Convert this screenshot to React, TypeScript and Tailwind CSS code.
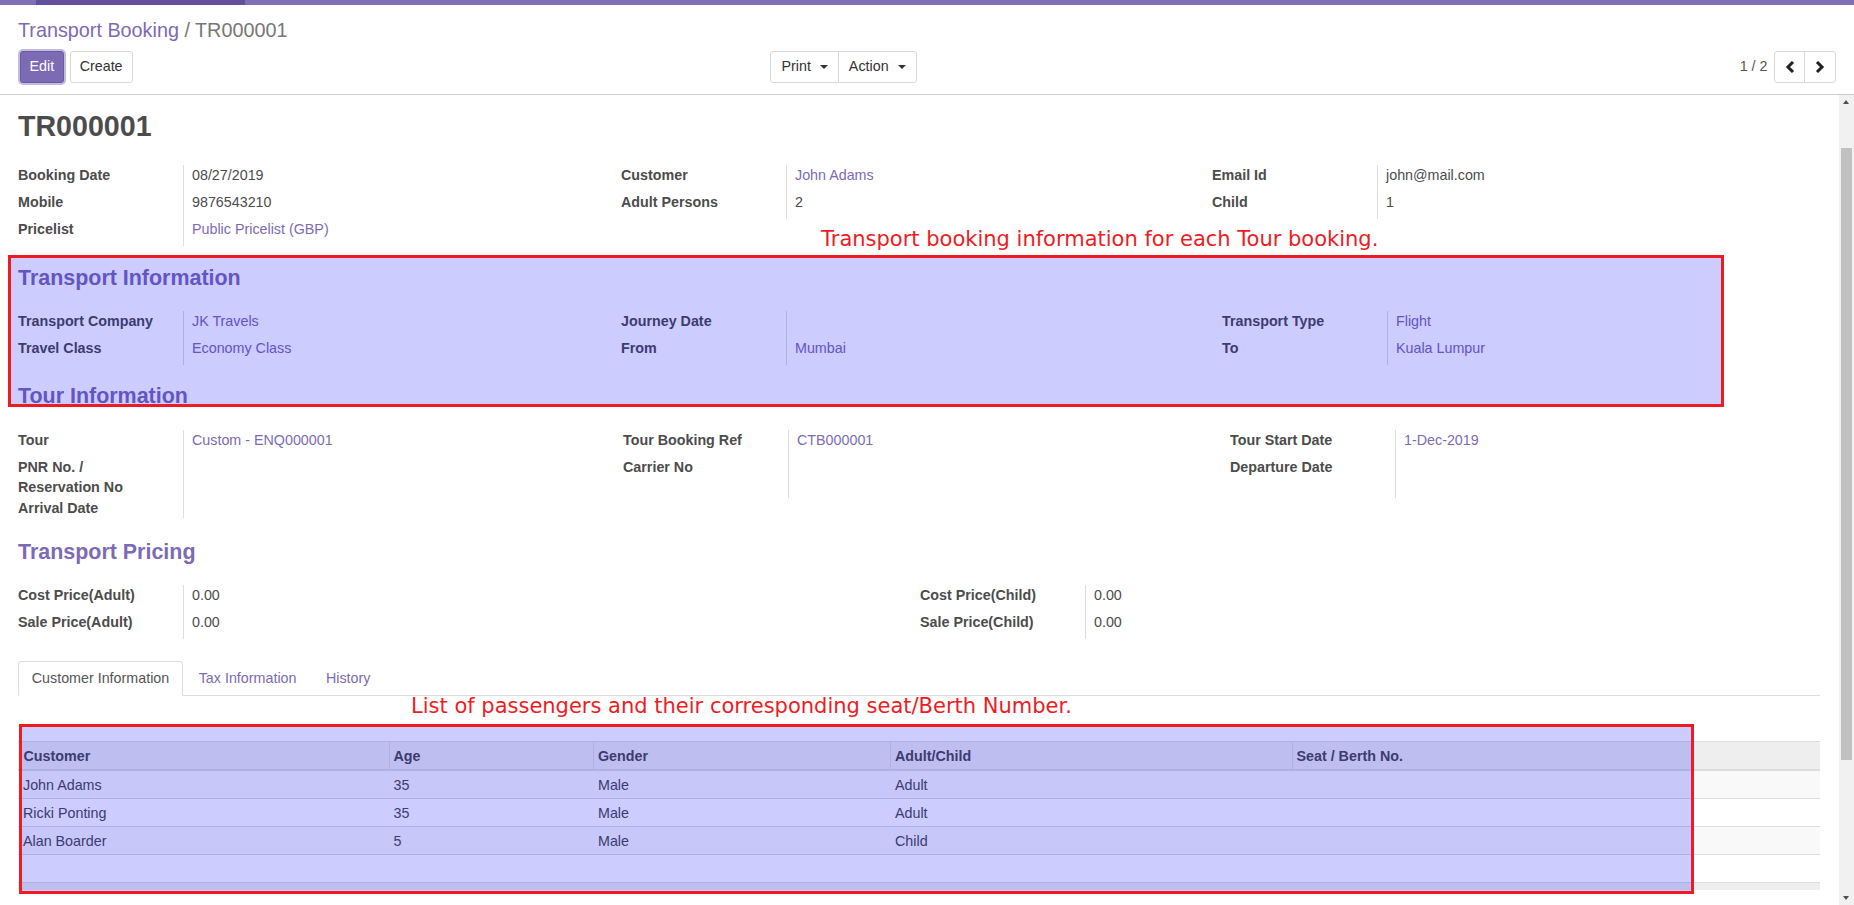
import React from "react";

type Field = { label: React.ReactNode; value?: string; link?: boolean; h: string };
type Column = { w: string; fields: Field[] };

function Group({ cols, className }: { cols: Column[]; className: string }) {
  return (
    <div className={`flex ${className}`}>
      {cols.map((c, i) => (
        <div key={i} className={c.w}>
          {c.fields.map((f, j) => (
            <div key={j} className={`flex ${f.h}`}>
              <div className="w-[165px] shrink-0 font-bold">{f.label}</div>
              <div
                className={`flex-1 border-l border-[#dddddd] pl-2 ${
                  f.link ? "text-[#7c6bb4]" : ""
                }`}
              >
                {f.value}
              </div>
            </div>
          ))}
        </div>
      ))}
    </div>
  );
}

function Heading({ children, className }: { children: React.ReactNode; className: string }) {
  return (
    <div className={`text-[21.45px] font-bold leading-[1.1] text-[#7c6bb4] ${className}`}>
      {children}
    </div>
  );
}

function Caret() {
  return (
    <span className="ml-[9px] inline-block h-0 w-0 border-x-[4px] border-t-[4px] border-x-transparent border-t-[#333]" />
  );
}

function Chevron({ dir }: { dir: "left" | "right" }) {
  return (
    <svg width="10" height="12" viewBox="0 0 10 12">
      <polyline
        points={dir === "left" ? "8,1 3,6 8,11" : "2,1 7,6 2,11"}
        fill="none"
        stroke="#222"
        strokeWidth="3"
        strokeLinejoin="miter"
      />
    </svg>
  );
}

const passengers = [
  { name: "John Adams", age: "35", gender: "Male", type: "Adult" },
  { name: "Ricki Ponting", age: "35", gender: "Male", type: "Adult" },
  { name: "Alan Boarder", age: "5", gender: "Male", type: "Child" },
];

export default function App() {
  return (
    <div className="relative h-[905px] w-[1854px] overflow-hidden bg-white font-['Liberation_Sans',Arial,sans-serif] text-[14.3px] leading-[20.43px] text-[#4c4c4c]">
      {/* navbar remnant */}
      <div className="flex h-[5px] bg-[#7e6fb6]">
        <div className="ml-[36px] w-[209px] bg-[#654f9f]" />
      </div>

      {/* control panel */}
      <div className="h-[90px] border-b border-[#cccccc] px-[18px]">
        <div className="pt-[11px] text-[19.8px] leading-[28.3px]">
          <span className="text-[#7c6bb4]">Transport Booking</span>
          <span className="text-[#777777]"> / TR000001</span>
        </div>
        <div className="mt-[6.4px] flex h-[32px]">
          <div className="flex w-[909px]">
            <button className="ml-[1.5px] h-[32px] rounded-[3px] border border-[#6b5aa5] bg-[#7c6bb4] px-[9px] text-[14.3px] text-white shadow-[0_0_0_2px_rgba(124,107,180,0.45)]">
              Edit
            </button>
            <button className="ml-[5.5px] h-[32px] rounded-[3px] border border-[#d9d9d9] bg-white px-[9px] text-[14.3px] text-[#333]">
              Create
            </button>
            <div className="ml-auto mr-[10.4px] flex h-[32px] rounded-[3px] border border-[#d9d9d9] text-[#333]">
              <div className="flex items-center border-r border-[#d9d9d9] px-[10px]">
                Print
                <Caret />
              </div>
              <div className="flex items-center px-[10px]">
                Action
                <Caret />
              </div>
            </div>
          </div>
          <div className="flex flex-1 items-center justify-end">
            <span className="mr-[6.5px] text-[#555]">1 / 2</span>
            <div className="flex h-[32px] rounded-[3px] border border-[#d9d9d9]">
              <div className="flex w-[30px] items-center justify-center border-r border-[#d9d9d9]">
                <Chevron dir="left" />
              </div>
              <div className="flex w-[30px] items-center justify-center">
                <Chevron dir="right" />
              </div>
            </div>
          </div>
        </div>
      </div>

      {/* content + scrollbar */}
      <div className="flex h-[810px]">
        <div className="flex-1 overflow-hidden pl-[18px] pr-[19px] pt-[16.3px]">
          <div className="text-[28.6px] font-bold leading-[1.1]">TR000001</div>

          <Group
            className="mt-[22px]"
            cols={[
              {
                w: "w-[603px]",
                fields: [
                  { label: "Booking Date", value: "08/27/2019", h: "h-[27px]" },
                  { label: "Mobile", value: "9876543210", h: "h-[27px]" },
                  { label: "Pricelist", value: "Public Pricelist (GBP)", link: true, h: "h-[27px]" },
                ],
              },
              {
                w: "w-[591px]",
                fields: [
                  { label: "Customer", value: "John Adams", link: true, h: "h-[27px]" },
                  { label: "Adult Persons", value: "2", h: "h-[27px]" },
                ],
              },
              {
                w: "flex-1",
                fields: [
                  { label: "Email Id", value: "john@mail.com", h: "h-[27px]" },
                  { label: "Child", value: "1", h: "h-[27px]" },
                ],
              },
            ]}
          />

          <Heading className="mt-[21.5px]">Transport Information</Heading>
          <Group
            className="mt-[20.1px]"
            cols={[
              {
                w: "w-[603px]",
                fields: [
                  { label: "Transport Company", value: "JK Travels", link: true, h: "h-[27px]" },
                  { label: "Travel Class", value: "Economy Class", link: true, h: "h-[27px]" },
                ],
              },
              {
                w: "w-[601px]",
                fields: [
                  { label: "Journey Date", value: "", h: "h-[27px]" },
                  { label: "From", value: "Mumbai", link: true, h: "h-[27px]" },
                ],
              },
              {
                w: "flex-1",
                fields: [
                  { label: "Transport Type", value: "Flight", link: true, h: "h-[27px]" },
                  { label: "To", value: "Kuala Lumpur", link: true, h: "h-[27px]" },
                ],
              },
            ]}
          />

          <Heading className="mt-[20.3px]">Tour Information</Heading>
          <Group
            className="mt-[21.1px]"
            cols={[
              {
                w: "w-[605px]",
                fields: [
                  { label: "Tour", value: "Custom - ENQ000001", link: true, h: "h-[27px]" },
                  {
                    label: (
                      <>
                        PNR No. /<br />
                        Reservation No
                      </>
                    ),
                    value: "",
                    h: "h-[40.86px]",
                  },
                  { label: "Arrival Date", value: "", h: "h-[20.43px]" },
                ],
              },
              {
                w: "w-[607px]",
                fields: [
                  { label: "Tour Booking Ref", value: "CTB000001", link: true, h: "h-[27px]" },
                  { label: "Carrier No", value: "", h: "h-[41px]" },
                ],
              },
              {
                w: "flex-1",
                fields: [
                  { label: "Tour Start Date", value: "1-Dec-2019", link: true, h: "h-[27px]" },
                  { label: "Departure Date", value: "", h: "h-[41px]" },
                ],
              },
            ]}
          />

          <Heading className="mt-[22.5px]">Transport Pricing</Heading>
          <Group
            className="mt-[20.6px]"
            cols={[
              {
                w: "w-[902px]",
                fields: [
                  { label: "Cost Price(Adult)", value: "0.00", h: "h-[27px]" },
                  { label: "Sale Price(Adult)", value: "0.00", h: "h-[27px]" },
                ],
              },
              {
                w: "flex-1",
                fields: [
                  { label: "Cost Price(Child)", value: "0.00", h: "h-[27px]" },
                  { label: "Sale Price(Child)", value: "0.00", h: "h-[27px]" },
                ],
              },
            ]}
          />

          {/* tabs */}
          <div className="mt-[22.2px] flex h-[35px] border-b border-[#dddddd]">
            <div className="mr-[2px] flex h-[35px] items-center rounded-t-[3px] border border-[#dddddd] border-b-white bg-white px-[12.75px] text-[#555]">
              Customer Information
            </div>
            <div className="mr-[2px] flex h-[35px] items-center border border-transparent px-[12.75px] text-[#7c6bb4]">
              Tax Information
            </div>
            <div className="flex h-[35px] items-center border border-transparent px-[12.75px] text-[#7c6bb4]">
              History
            </div>
          </div>

          {/* table */}
          <div className="mt-[45.3px]">
            <div className="flex h-[30px] border-t border-b-[2px] border-[#dddddd] bg-[#eeeeee] font-bold">
              <div className="flex w-[370.5px] items-center pl-[5.5px]">Customer</div>
              <div className="flex w-[204.5px] items-center border-l border-[#dddddd] pl-[4px]">Age</div>
              <div className="flex w-[297px] items-center border-l border-[#dddddd] pl-[4px]">Gender</div>
              <div className="flex w-[401.5px] items-center border-l border-[#dddddd] pl-[4px]">Adult/Child</div>
              <div className="flex flex-1 items-center border-l border-[#dddddd] pl-[4px]">Seat / Berth No.</div>
            </div>
            {passengers.map((p, i) => (
              <div
                key={i}
                className={`flex h-[28px] border-b border-[#dddddd] ${
                  i % 2 === 0 ? "bg-[#f9f9f9]" : "bg-white"
                }`}
              >
                <div className="flex w-[370.5px] items-center pl-[5px]">{p.name}</div>
                <div className="flex w-[204.5px] items-center pl-[5px]">{p.age}</div>
                <div className="flex w-[297px] items-center pl-[5px]">{p.gender}</div>
                <div className="flex w-[401.5px] items-center pl-[5px]">{p.type}</div>
                <div className="flex-1" />
              </div>
            ))}
            <div className="h-[28px] border-b border-[#dddddd] bg-white" />
            <div className="h-[7px] bg-[#eeeeee]" />
          </div>
        </div>

        {/* scrollbar */}
        <div className="relative w-[15px] bg-[#f1f1f1]">
          <div className="absolute left-[4px] top-[5px] h-0 w-0 border-x-[3.5px] border-b-[4px] border-x-transparent border-b-[#505050]" />
          <div className="absolute left-[2px] right-[2px] top-[53px] h-[612px] bg-[#c1c1c1]" />
          <div className="absolute bottom-[5px] left-[4px] h-0 w-0 border-x-[3.5px] border-t-[4px] border-x-transparent border-t-[#505050]" />
        </div>
      </div>

      {/* annotation overlays */}
      <div className="absolute left-[8px] top-[255px] h-[152px] w-[1716px] border-[3px] border-[#ed1c24] bg-[rgba(0,0,255,0.2)]" />
      <div className="absolute left-[18.6px] top-[724px] h-[170px] w-[1675px] border-[3px] border-[#ed1c24] bg-[rgba(0,0,255,0.2)]" />
      <div className="absolute left-[821px] top-[229px] whitespace-nowrap font-['DejaVu_Sans',sans-serif] text-[21px] leading-none text-[#ed1c24]">
        Transport booking information for each Tour booking.
      </div>
      <div className="absolute left-[411px] top-[696px] whitespace-nowrap font-['DejaVu_Sans',sans-serif] text-[21px] leading-none text-[#ed1c24]">
        List of passengers and their corresponding seat/Berth Number.
      </div>
    </div>
  );
}
